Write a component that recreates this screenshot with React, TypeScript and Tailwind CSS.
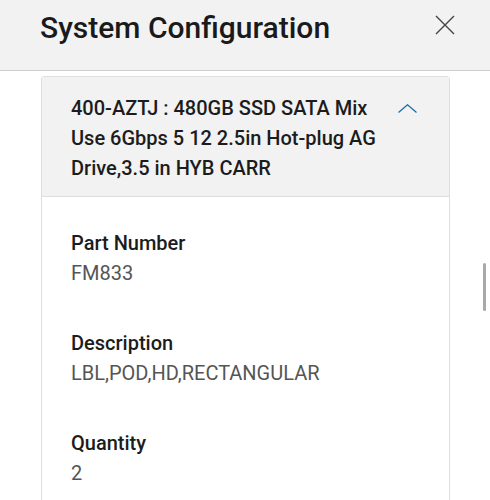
const fields = [
  { label: 'Part Number', value: 'FM833' },
  { label: 'Description', value: 'LBL,POD,HD,RECTANGULAR' },
  { label: 'Quantity', value: '2' },
]

export default function App() {
  return (
    <div className="relative h-[500px] w-[490px] overflow-hidden bg-white font-['Roboto',sans-serif]">
      {/* Header */}
      <div className="flex h-[71px] items-start justify-between border-b border-[#cfcfcf] bg-[#f2f2f2] pl-10 pr-[35px] pt-[10px]">
        <h1 className="text-[30px] font-medium leading-[36px] text-[#1a1a1a]">System Configuration</h1>
        <svg className="mt-[5px] h-5 w-5" viewBox="0 0 20 20" fill="none" stroke="#444" strokeWidth="1.4">
          <path d="M1 1 L19 19 M19 1 L1 19" />
        </svg>
      </div>

      {/* Card */}
      <div className="ml-[41px] mt-[5px] w-[409px] rounded-[3px] border border-[#dedede] pb-10">
        <div className="flex items-start justify-between border-b border-[#dedede] bg-[#f2f2f2] pb-[13px] pl-[29px] pr-[32px] pt-4">
          <p className="w-[310px] text-[20px] font-medium leading-[30px] text-[#1c1c1c]">
            400-AZTJ : 480GB SSD SATA Mix Use 6Gbps 5 12 2.5in Hot-plug AG Drive,3.5 in HYB CARR
          </p>
          <svg className="mt-[11px] h-[9px] w-[19px]" viewBox="0 0 19 9" fill="none" stroke="#1b6fa3" strokeWidth="1.3">
            <path d="M0.5 8.5 L9.5 0.8 L18.5 8.5" />
          </svg>
        </div>
        <div className="flex flex-col gap-10 pl-[29px] pt-[31px]">
          {fields.map((f) => (
            <div key={f.label}>
              <div className="text-[20px] font-medium leading-[30px] text-[#1c1c1c]">{f.label}</div>
              <div className="text-[20px] leading-[30px] text-[#555]">{f.value}</div>
            </div>
          ))}
        </div>
      </div>

      {/* Scrollbar */}
      <div className="absolute left-[483px] top-[263px] h-[48px] w-[3px] rounded-full bg-[#a9a9a9]" />
    </div>
  )
}
